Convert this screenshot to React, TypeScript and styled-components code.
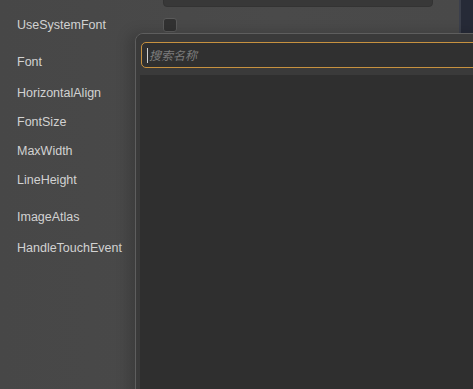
import React, { FunctionComponent } from 'react';
import styled, { createGlobalStyle } from 'styled-components';

const GlobalStyle = createGlobalStyle`
  html, body {
    margin: 0;
    padding: 0;
    background: #494949;
  }
  #root {
    width: 473px;
    height: 389px;
  }
`;

const Screen = styled.div`
  position: relative;
  width: 473px;
  height: 389px;
  overflow: hidden;
  display: flex;
  font-family: 'Liberation Sans', Arial, sans-serif;
`;

const Inspector = styled.div`
  width: 459px;
  height: 100%;
  background: linear-gradient(90deg, #474747 0%, #4a4a4a 60%, #494949 100%);
`;

const SidePanel = styled.div`
  flex: 1;
  height: 100%;
  background: #262a37;
  border-left: 2px solid #3b3f4b;
`;

const PropList = styled.div`
  margin-top: -19px;
  display: flex;
  flex-direction: column;
`;

const PropRow = styled.div<{ $space?: number }>`
  height: 29px;
  margin-top: ${(p) => p.$space ?? 0}px;
  display: flex;
  align-items: center;
`;

const Label = styled.div`
  width: 146px;
  padding-left: 17px;
  font-size: 12.5px;
  color: #d2d2d2;
  white-space: nowrap;
`;

const TextField = styled.div`
  width: 270px;
  height: 22px;
  box-sizing: border-box;
  background: #383838;
  border: 1px solid #333;
  border-radius: 4px;
`;

const Checkbox = styled.div`
  width: 14px;
  height: 14px;
  box-sizing: border-box;
  background: #323232;
  border: 1px solid #5a5a5a;
  border-radius: 3px;
`;

const Popup = styled.div`
  position: absolute;
  left: 135px;
  top: 33px;
  right: -10px;
  bottom: -10px;
  box-sizing: border-box;
  background: #3a3a3a;
  border: 1px solid #5e5e5e;
  border-radius: 8px 0 0 0;
  box-shadow: -6px 0 14px rgba(0, 0, 0, 0.18);
  display: flex;
  flex-direction: column;
`;

const SearchBar = styled.div`
  padding: 8px 0 7px 5px;
  background: #3a3a3a;
  border-radius: 8px 0 0 0;
`;

const SearchBox = styled.div`
  height: 26px;
  box-sizing: border-box;
  background: #303030;
  border: 1.5px solid #c7913f;
  border-radius: 5px;
  display: flex;
  align-items: center;
  padding-left: 5px;
  gap: 1px;
`;

const Caret = styled.span`
  width: 1px;
  height: 15px;
  background: #cfcfcf;
`;

const Placeholder = styled.span`
  font-family: 'Noto Sans CJK SC', 'Liberation Sans', sans-serif;
  font-style: italic;
  font-size: 12px;
  line-height: 14px;
  color: #7c7c7c;
`;

const ResultList = styled.div`
  flex: 1;
  margin-left: 4px;
  background: #2f2f2f;
`;

const props: { name: string; space?: number; checkbox?: boolean }[] = [
  { name: 'UseSystemFont', checkbox: true },
  { name: 'Font', space: 8 },
  { name: 'HorizontalAlign', space: 2 },
  { name: 'FontSize' },
  { name: 'MaxWidth' },
  { name: 'LineHeight' },
  { name: 'ImageAtlas', space: 8 },
  { name: 'HandleTouchEvent', space: 2 },
];

const App: FunctionComponent = () => {
  return (
    <>
      <GlobalStyle />
      <Screen>
        <Inspector>
          <PropList>
            <PropRow>
              <Label />
              <TextField />
            </PropRow>
            {props.map((p) => (
              <PropRow key={p.name} $space={p.space}>
                <Label>{p.name}</Label>
                {p.checkbox && <Checkbox />}
              </PropRow>
            ))}
          </PropList>
        </Inspector>
        <SidePanel />
        <Popup>
          <SearchBar>
            <SearchBox>
              <Caret />
              <Placeholder>搜索名称</Placeholder>
            </SearchBox>
          </SearchBar>
          <ResultList />
        </Popup>
      </Screen>
    </>
  );
};

export default App;
